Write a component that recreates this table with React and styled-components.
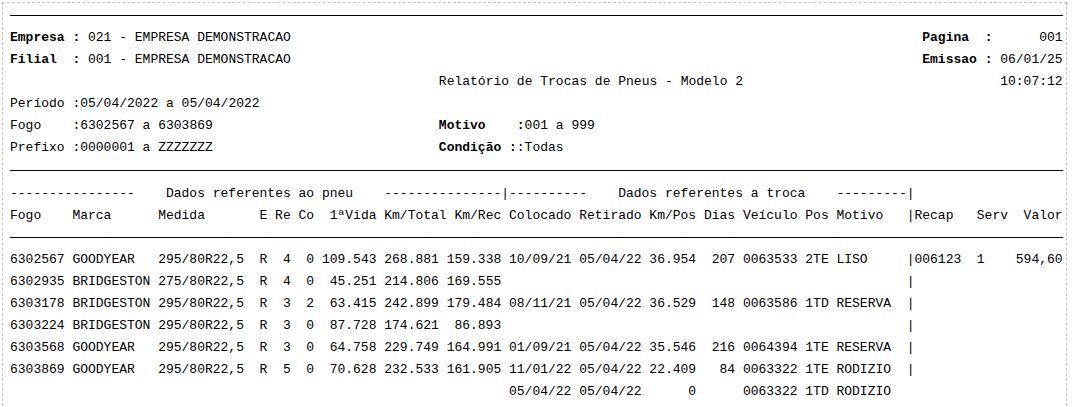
import React from 'react'
import styled, { createGlobalStyle } from 'styled-components'

const COLS = 135

const GlobalStyle = createGlobalStyle`
  body {
    margin: 0;
    background: #fff;
  }
`

const Page = styled.div`
  box-sizing: border-box;
  width: 1065px;
  margin: 2px;
  padding: 12px 3px 24px 7px;
  border: 1px dashed #c6c6c6;
  font-family: "Liberation Mono", "Courier New", monospace;
  font-size: 13px;
  color: #000;
`

const Rule = styled.div`
  width: ${COLS}ch;
  margin-top: ${(p) => p.$top || 0}px;
  border-top: 1px solid #000;
`

const Block = styled.div`
  margin-top: ${(p) => p.$top}px;
`

// a linha do relatorio: 135 colunas de um caractere
const Line = styled.div`
  box-sizing: border-box;
  display: grid;
  grid-template-columns: repeat(${COLS}, 1ch);
  height: 22px;
  padding-top: 4px;
  line-height: 18px;
  white-space: pre;
`

const Field = styled.span`
  grid-column: ${(p) => p.$col + 1} / span ${(p) => p.$span};
  text-align: ${(p) => (p.$right ? 'right' : 'left')};
  font-weight: ${(p) => (p.$bold ? 700 : 400)};
`

// [coluna, texto, negrito]
const headerLines = [
  [[0, 'Empresa :', true], [10, '021 - EMPRESA DEMONSTRACAO'], [117, 'Pagina  :', true], [132, '001']],
  [[0, 'Filial  :', true], [10, '001 - EMPRESA DEMONSTRACAO'], [117, 'Emissao :', true], [127, '06/01/25']],
  [[55, 'Relatório de Trocas de Pneus - Modelo 2'], [127, '10:07:12']],
  [[0, 'Período :'], [9, '05/04/2022 a 05/04/2022']],
  [[0, 'Fogo    :'], [9, '6302567 a 6303869'], [55, 'Motivo    :', true], [66, '001 a 999']],
  [[0, 'Prefixo :'], [9, '0000001 a ZZZZZZZ'], [55, 'Condição :', true], [65, ':Todas']],
]

const titleLines = [
  [[0, '----------------'], [20, 'Dados referentes ao pneu'], [48, '---------------|'],
   [64, '----------'], [78, 'Dados referentes a troca'], [106, '---------|']],
  [[0, 'Fogo'], [8, 'Marca'], [19, 'Medida'], [32, 'E'], [34, 'Re'], [37, 'Co'], [41, '1ªVida'],
   [48, 'Km/Total'], [57, 'Km/Rec'], [64, 'Colocado'], [73, 'Retirado'], [82, 'Km/Pos'],
   [89, 'Dias'], [94, 'Veículo'], [102, 'Pos'], [106, 'Motivo'], [115, '|Recap'],
   [124, 'Serv'], [130, 'Valor']],
]

const columns = [
  { key: 'fogo', col: 0, w: 7 },
  { key: 'marca', col: 8, w: 10 },
  { key: 'medida', col: 19, w: 11 },
  { key: 'e', col: 32, w: 1 },
  { key: 're', col: 34, w: 2, right: true },
  { key: 'co', col: 37, w: 2, right: true },
  { key: 'vida', col: 40, w: 7, right: true },
  { key: 'kmTotal', col: 48, w: 7, right: true },
  { key: 'kmRec', col: 56, w: 7, right: true },
  { key: 'colocado', col: 64, w: 8 },
  { key: 'retirado', col: 73, w: 8 },
  { key: 'kmPos', col: 82, w: 6, right: true },
  { key: 'dias', col: 89, w: 4, right: true },
  { key: 'veiculo', col: 94, w: 7 },
  { key: 'pos', col: 102, w: 3 },
  { key: 'motivo', col: 106, w: 9 },
  { key: 'sep', col: 115, w: 1 },
  { key: 'recap', col: 116, w: 6 },
  { key: 'serv', col: 124, w: 1 },
  { key: 'valor', col: 129, w: 6, right: true },
]

const tire = (fogo, marca, medida, re, co, vida, kmTotal, kmRec) => ({
  fogo, marca, medida, e: 'R', re, co, vida, kmTotal, kmRec, sep: '|',
})

const rows = [
  {
    ...tire('6302567', 'GOODYEAR', '295/80R22,5', '4', '0', '109.543', '268.881', '159.338'),
    colocado: '10/09/21', retirado: '05/04/22', kmPos: '36.954', dias: '207',
    veiculo: '0063533', pos: '2TE', motivo: 'LISO', recap: '006123', serv: '1', valor: '594,60',
  },
  tire('6302935', 'BRIDGESTON', '275/80R22,5', '4', '0', '45.251', '214.806', '169.555'),
  {
    ...tire('6303178', 'BRIDGESTON', '295/80R22,5', '3', '2', '63.415', '242.899', '179.484'),
    colocado: '08/11/21', retirado: '05/04/22', kmPos: '36.529', dias: '148',
    veiculo: '0063586', pos: '1TD', motivo: 'RESERVA',
  },
  tire('6303224', 'BRIDGESTON', '295/80R22,5', '3', '0', '87.728', '174.621', '86.893'),
  {
    ...tire('6303568', 'GOODYEAR', '295/80R22,5', '3', '0', '64.758', '229.749', '164.991'),
    colocado: '01/09/21', retirado: '05/04/22', kmPos: '35.546', dias: '216',
    veiculo: '0064394', pos: '1TE', motivo: 'RESERVA',
  },
  {
    ...tire('6303869', 'GOODYEAR', '295/80R22,5', '5', '0', '70.628', '232.533', '161.905'),
    colocado: '11/01/22', retirado: '05/04/22', kmPos: '22.409', dias: '84',
    veiculo: '0063322', pos: '1TE', motivo: 'RODIZIO',
  },
  {
    colocado: '05/04/22', retirado: '05/04/22', kmPos: '0',
    veiculo: '0063322', pos: '1TD', motivo: 'RODIZIO',
  },
]

const TextLine = ({ fields }) => (
  <Line>
    {fields.map(([col, text, bold]) => (
      <Field key={col} $col={col} $span={text.length} $bold={bold}>
        {text}
      </Field>
    ))}
  </Line>
)

const DataRow = ({ row }) => (
  <Line>
    {columns.map((c) =>
      row[c.key] ? (
        <Field key={c.key} $col={c.col} $span={c.w} $right={c.right}>
          {row[c.key]}
        </Field>
      ) : null
    )}
  </Line>
)

export default function App() {
  return (
    <>
      <GlobalStyle />
      <Page>
        <Rule />
        <Block $top={9}>
          {headerLines.map((fields, i) => (
            <TextLine key={i} fields={fields} />
          ))}
        </Block>
        <Rule $top={13} />
        <Block $top={10}>
          {titleLines.map((fields, i) => (
            <TextLine key={i} fields={fields} />
          ))}
        </Block>
        <Rule $top={12} />
        <Block $top={9}>
          {rows.map((row, i) => (
            <DataRow key={i} row={row} />
          ))}
        </Block>
      </Page>
    </>
  )
}
